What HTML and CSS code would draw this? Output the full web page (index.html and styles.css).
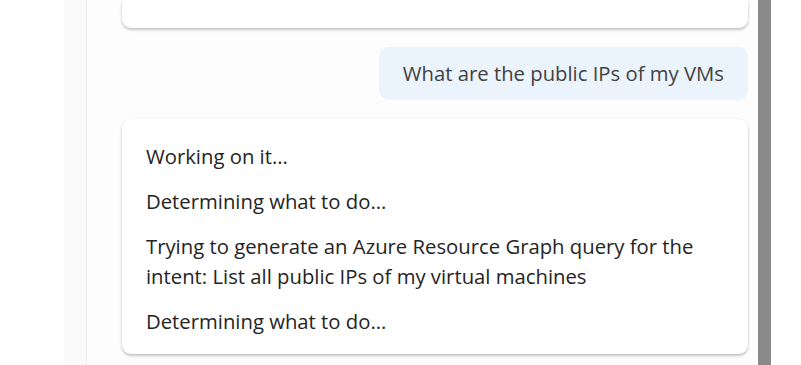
FILE: index.html
```html
<!DOCTYPE html>
<html>
  <head>
    <meta charset="UTF-8" />
    <title>Chat</title>
    <link rel="stylesheet" href="styles.css">
  </head>
  <body>
    <div class="shell">
      <div class="gutter"></div>
      <div class="side"></div>
      <div class="chat">
        <div class="thread">
          <div class="card card-top"></div>
          <div class="user-row">
            <div class="bubble">What are the public IPs of my VMs</div>
          </div>
          <div class="card reply">
            <p>Working on it...</p>
            <p>Determining what to do...</p>
            <p>Trying to generate an Azure Resource Graph query for the intent: List all public IPs of my virtual machines</p>
            <p>Determining what to do...</p>
          </div>
        </div>
      </div>
      <div class="scrollbar"></div>
      <div class="edge"></div>
    </div>
  </body>
</html>
```

FILE: styles.css
```css
body{
  margin:0;
  background:#ffffff;
  font-family:"Open Sans", "Noto Sans", sans-serif;
  overflow:hidden;
}

.shell{
  display:flex;
  height:365px;
}

.gutter{
  width:64px;
  background:#ffffff;
}

.side{
  width:22px;
  background:#fafafa;
  border-right:1px solid #ececec;
}

.chat{
  flex:1;
  background:#fdfdfd;
  overflow:hidden;
}

.thread{
  display:flex;
  flex-direction:column;
  padding:0 10px 0 35px;
}

.card{
  background:#ffffff;
  border-radius:9px;
  box-shadow:0 2px 3px rgba(0,0,0,0.22), 0 0 2px rgba(0,0,0,0.08);
}

.card-top{
  height:28px;
  border-top-left-radius:0;
  border-top-right-radius:0;
}

.user-row{
  display:flex;
  justify-content:flex-end;
  margin-top:19px;
}

.bubble{
  background:#ebf3fc;
  color:#424242;
  border-radius:10px;
  padding:11px 24px 12px;
  font-size:20.3px;
  line-height:30px;
}

.reply{
  margin-top:19px;
  padding:22px 24px 18px;
  color:#242424;
  font-size:20.3px;
  line-height:30px;
}

.reply p{
  margin:0 0 15px;
}

.reply p:last-child{
  margin-bottom:0;
}

.scrollbar{
  width:13px;
  background:#8a8a8a;
}

.edge{
  width:30px;
  background:#ffffff;
}
```
